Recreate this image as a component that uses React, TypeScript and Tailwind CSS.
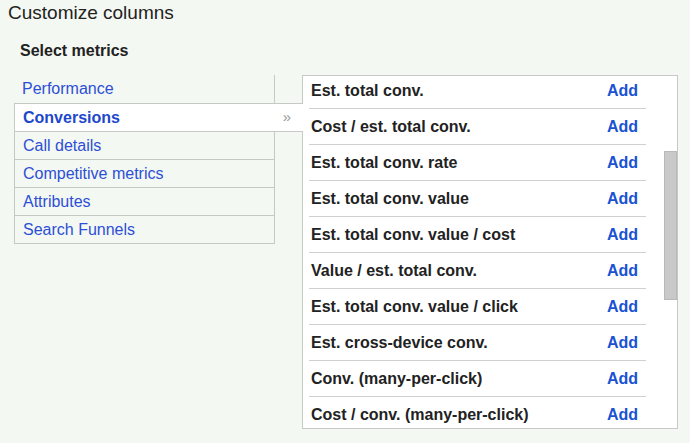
const categories = [
  "Performance",
  "Conversions",
  "Call details",
  "Competitive metrics",
  "Attributes",
  "Search Funnels",
];

const metrics = [
  "Est. total conv.",
  "Cost / est. total conv.",
  "Est. total conv. rate",
  "Est. total conv. value",
  "Est. total conv. value / cost",
  "Value / est. total conv.",
  "Est. total conv. value / click",
  "Est. cross-device conv.",
  "Conv. (many-per-click)",
  "Cost / conv. (many-per-click)",
];

function CategoryList({ selected }: { selected: string }) {
  return (
    <div className="w-[288px] shrink-0">
      {categories.map((c, i) => {
        if (c === selected) {
          return (
            <div
              key={c}
              className="relative z-10 mr-[-1px] flex h-[29px] items-center justify-between border border-r-0 border-[#c8c8c8] bg-white pl-[8px] pr-[12px]"
            >
              <span className="text-[16px] font-bold text-[#1d48cc]">{c}</span>
              <span className="mt-[-2px] text-[15px] leading-none text-[#9a9a9a]">»</span>
            </div>
          );
        }
        const first = i === 0;
        return (
          <div
            key={c}
            className={`flex h-[28px] w-[261px] items-center border-r border-[#c8c8c8] pl-[8px] ${
              first ? "h-[27px]" : "border-b border-l"
            }`}
          >
            <span className="text-[16px] text-[#2c4fd6]">{c}</span>
          </div>
        );
      })}
    </div>
  );
}

function MetricsPanel() {
  return (
    <div className="relative h-[354px] w-[376px] overflow-hidden border border-[#c8c8c8] bg-white">
      <div className="mt-[-3px] ml-[6px] w-[337px]">
        {metrics.map((m, i) => (
          <div
            key={m}
            className={`flex h-[36px] items-center justify-between pl-[2px] pr-[8px] ${
              i < metrics.length - 1 ? "border-b border-[#d0d0d0]" : ""
            }`}
          >
            <span className="text-[16px] font-bold text-[#222]">{m}</span>
            <span className="text-[16px] font-bold text-[#1a52d4]">Add</span>
          </div>
        ))}
      </div>
      {/* scrollbar thumb */}
      <div className="absolute right-0 top-[75px] h-[149px] w-[13px] border border-[#b9b9b9] bg-[#c9c9c9]" />
    </div>
  );
}

export default function App() {
  return (
    <div
      className="h-[443px] w-[690px] overflow-hidden bg-[#f4f8f2] text-[#222]"
      style={{ fontFamily: '"Liberation Sans", Arial, sans-serif' }}
    >
      <h1 className="pl-[8px] pt-[2px] text-[19px] leading-[22px] text-[#222]">Customize columns</h1>
      <h2 className="mt-[18px] pl-[20px] text-[16px] font-bold leading-[18px] text-[#222]">
        Select metrics
      </h2>
      <div className="mt-[15px] flex pl-[14px]">
        <CategoryList selected="Conversions" />
        <MetricsPanel />
      </div>
    </div>
  );
}
